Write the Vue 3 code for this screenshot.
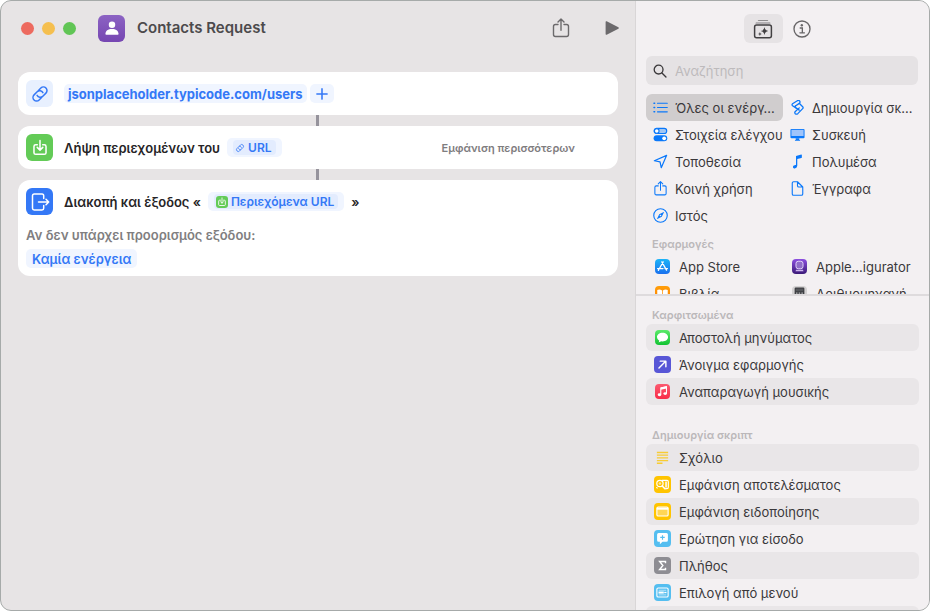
<script setup>
import { ref } from 'vue'

const search = ref('')
const selected = ref('all')

const link =
  '<g fill="none" stroke="currentColor" stroke-width="1.5" stroke-linecap="round" transform="rotate(-45 10 10)"><path d="M8.6 13.6H5.2a3.6 3.6 0 0 1 0-7.2h4.4a3.6 3.6 0 0 1 3.4 4.7"/><path d="M11.4 6.4h3.4a3.6 3.6 0 0 1 0 7.2h-4.4A3.6 3.6 0 0 1 7 8.9"/></g>'
const download =
  '<g fill="none" stroke="#fff" stroke-width="1.7" stroke-linecap="round" stroke-linejoin="round"><path d="M7 6.4H5.2Q3.3 6.4 3.3 8.2v7Q3.3 17 5.2 17h9.6q1.9 0 1.9-1.8v-7q0-1.8-1.9-1.8H13"/><path d="M10 1.8v10.4M6.9 9.3l3.1 3.1 3.1-3.1"/></g>'
const share =
  '<g fill="none" stroke="currentColor" stroke-width="1.4" stroke-linecap="round" stroke-linejoin="round"><path d="M7 6.500H4.400Q2.500 6.500 2.500 8.400v8.200q0 1.900 1.900 1.900h11.200q1.900 0 1.900-1.900V8.400q0-1.900-1.900-1.900H13"/><path d="M10 12.300V1M7 3.900l3-3 3 3"/></g>'

const icons = {
  link,
  download,
  share,
  person: '<circle cx="10" cy="6.300" r="3.600"/><path d="M2.700 16.800c0-3.400 3-5.600 7.300-5.600s7.300 2.200 7.300 5.600q0 .8-.9.8H3.600q-.9 0-.9-.8z"/>',
  exit: '<g fill="none" stroke="#fff" stroke-width="1.500" stroke-linecap="round" stroke-linejoin="round"><path d="M13.700 6.500V3.800q0-1.700-1.700-1.700H4.200q-1.700 0-1.700 1.700v12.400q0 1.700 1.700 1.700H12q1.700 0 1.700-1.700v-2.700"/><path d="M8.500 10h10.200M16 7.300l2.700 2.700-2.700 2.700"/></g>',
  play: '<path d="M2.900 3.300q0-1.300 1.200-.7l13 6.600q1.300.8 0 1.600l-13 6.600q-1.200.6-1.200-.7z"/>',
  library: '<path d="M5.500 1.100h9q.7 0 .7.700H4.800q0-.7.700-.7z" opacity=".7"/><path d="M3.200 3.400h13.600q.7 0 .7 1h-15q0-1 .700-1z" opacity=".6"/><rect x="1.600" y="6" width="16.800" height="12.800" rx="2" fill="none" stroke="currentColor" stroke-width="1.500"/><path d="M11.500 8.100q.4 3.500 3.800 4-3.400.5-3.800 4-.4-3.500-3.800-4 3.400-.5 3.800-4zM6.900 13.100q.2 1.800 1.900 2-1.700.2-1.900 2-.2-1.800-1.900-2 1.700-.2 1.900-2z"/>',
  info: '<circle cx="10" cy="10" r="8.900" fill="none" stroke="currentColor" stroke-width="1.500"/><circle cx="9.800" cy="5.800" r="1.300"/><path d="M8 8.900h2.400v5.300M7.700 14.300h5" fill="none" stroke="currentColor" stroke-width="1.500" stroke-linecap="round"/>',
  search: '<g fill="none" stroke="currentColor" stroke-width="1.900" stroke-linecap="round"><circle cx="8" cy="8" r="6.300"/><path d="M12.800 12.800l5.700 5.700"/></g>',
  plus: '<path d="M10 1.500v17M1.500 10h17" fill="none" stroke="currentColor" stroke-width="2.600" stroke-linecap="round"/>',
  list: '<g stroke="currentColor" stroke-width="1.600" stroke-linecap="round"><path d="M6 4.300h13M6 10h13M6 15.700h13"/><path d="M1.300 4.300h.9M1.300 10h.9M1.300 15.700h.9" stroke-width="2"/></g>',
  toggles: '<rect x="1.500" y="1.800" width="16.800" height="6.800" rx="3.400" fill="none" stroke="currentColor" stroke-width="1.500"/><path d="M5 1.800h9.900a3.400 3.400 0 0 1 0 6.800H5a3.400 3.400 0 0 0 0-6.800z" opacity=".35"/><circle cx="5" cy="5.200" r="3.100" fill="#fff" stroke="currentColor" stroke-width="1.500"/><rect x=".8" y="11" width="18.200" height="8" rx="4"/><circle cx="14.900" cy="15" r="2.500" fill="#fff"/>',
  arrow: '<path d="M18.200 1.800L1.800 9l7.600 1.600L11 18.200z" fill="none" stroke="currentColor" stroke-width="1.600" stroke-linejoin="round"/>',
  compass: '<circle cx="10" cy="10" r="9" fill="none" stroke="currentColor" stroke-width="1.500"/><path d="M15 5l-3.300 6.700L5 15l3.300-6.700z"/><circle cx="10" cy="10" r="1.100" fill="#f3f0f2"/>',
  script: '<g fill="none" stroke="currentColor" stroke-width="1.700" stroke-linejoin="round" stroke-linecap="round"><path d="M7.400 10.200L3.400 7.600Q2 6.300 3.400 5L9.800.9q2-.9 3.200.6 1 1.700-.6 3L7.200 8"/><path d="M7.200 8q-1 1 .2 2.200l5 3.300"/><path d="M12.600 4.700l4.300 4.200q1.200 1.400 0 2.600l-6.500 6.700q-1.800 1.400-3.400.1-1.300-1.600.1-3.100l5.300-4.700"/></g>',
  display: '<rect x=".6" y="2.600" width="18.800" height="12.400" rx="1.400"/><rect x="1.900" y="3.800" width="16.200" height="8.200" fill="#9fc4fb"/><path d="M7.600 15h4.800v2.300h1v1H6.600v-1h1z"/>',
  note: '<path d="M8 2.500L15 .7q.8-.1.8.700v3.200q0 .5-.6.700L9.700 6.700v9q0 2.900-3.300 3.500-2.500.4-2.500-1.800 0-1.800 2.200-2.300l1.200-.3q.700-.2.700-.9z"/>',
  doc: '<path d="M3 2.800Q3 1 4.800 1H10l7 7v9.200Q17 19 15.200 19H4.800Q3 19 3 17.200zM10 1.200v5q0 1.800 1.800 1.800h5" fill="none" stroke="currentColor" stroke-width="1.500" stroke-linejoin="round"/>',
  store: '<g stroke="#fff" stroke-width="1.700" stroke-linecap="round"><path d="M10.900 3.800L5.900 12.600M9.100 3.800l6.300 11M3.400 12.700h7.300M13.300 12.700h3.300M5 14.200l-.5.900"/></g>',
  configurator: '<rect x="5.300" y="3" width="9.400" height="10" rx="3" fill="#8f6cc8" stroke="#eadcff" stroke-width="1.200"/><path d="M5.500 14.300h9l.9 2H4.600z" fill="#cdb6ee"/>',
  books: '<path d="M9.500 6Q6.500 4 3 5.200v9.500q3.600-.9 6.500.8zM10.500 6Q13.500 4 17 5.200v9.500q-3.600-.9-6.500.8z" fill="#fff"/>',
  calculator: '<rect x="3.500" y="2" width="13" height="16" rx="1.500" fill="#3d3e42"/><rect x="5" y="3.500" width="10" height="3.500" fill="#55575b"/><path d="M5.300 9.500h9.400M5.300 12.500h9.400M5.300 15.500h9.400" stroke="#b7b8bb" stroke-width="1.500" stroke-dasharray="2 1.600"/>',
  bubble: '<path d="M10 3.500c4.200 0 7.400 2.500 7.400 5.900s-3.200 5.900-7.400 5.900q-1 0-1.900-.2-1.500 1.300-3.500 1.300.9-.9 1.100-2.200-3.100-1.500-3.100-4.800C2.600 6 5.800 3.500 10 3.500z" fill="#fff"/>',
  upright: '<path d="M5.300 14.700l8.900-8.900M7 5.500h7.500V13" fill="none" stroke="#fff" stroke-width="1.900" stroke-linecap="round" stroke-linejoin="round"/>',
  music: '<path d="M7.700 14V5.200l7.600-1.600v8.900" fill="none" stroke="#fff" stroke-width="1.400"/><path d="M7.700 4.600l7.600-1.600v3L7.700 7.600z" fill="#fff"/><ellipse cx="6" cy="14.300" rx="2.400" ry="1.900" fill="#fff"/><ellipse cx="13.600" cy="12.800" rx="2.400" ry="1.900" fill="#fff"/>',
  comment: '<path d="M2.500 3.300h15M2.500 6.900h15M2.500 10.500h15M2.500 14.100h15M2.500 17.700h7.500" stroke="#f7cc35" stroke-width="1.800"/>',
  result: '<path d="M9 4.500h7q1.800 0 1.800 1.800v7.400q0 1.800-1.800 1.800h-2.500M3.500 15q-1.300-.2-1.300-1.800" fill="none" stroke="#fff" stroke-width="1.500"/><path d="M13.500 6h2.600v8h-2.600z" fill="#fff" opacity=".8"/><circle cx="6.600" cy="8.600" r="4.200" fill="#ffc400" stroke="#fff" stroke-width="1.600"/><path d="M9.700 11.900l3.500 3.700" stroke="#fff" stroke-width="2.100" stroke-linecap="round"/><circle cx="6.600" cy="8.600" r="1.700" fill="#fff" opacity=".6"/>',
  window: '<rect x="2.500" y="4" width="15" height="12" rx="1.800" fill="#ffd655" stroke="#fff" stroke-width="1.500"/><path d="M2.500 5h15v2.600h-15z" fill="#fff"/>',
  ask: '<path d="M4.800 2.800h10.400q2 0 2 2v7.400q0 2-2 2H10l-3.500 3.300v-3.300H4.800q-2 0-2-2V4.800q0-2 2-2z" fill="#fff"/><path d="M10 5.500v6M7 8.500h6" stroke="#55bef0" stroke-width="1.500"/>',
  sigma: '<path d="M14 7V4.700H6.200L10.500 10l-4.300 5.300H14V13" fill="none" stroke="#fff" stroke-width="1.900"/>',
  menu: '<rect x="2.500" y="4" width="15" height="12" rx="1.800" fill="none" stroke="#fff" stroke-width="1.500"/><path d="M5 7h10M5 13.200h10" stroke="#fff" stroke-width="1.100" opacity=".7"/><path d="M4.700 8.700h7v2.700h-7z" fill="#fff"/><path d="M12.300 10h3" stroke="#fff" stroke-width="1.700"/>',
}

const categories = [
  { id: 'all', icon: 'list', label: 'Όλες οι ενέργ…' },
  { id: 'scripting', icon: 'script', label: 'Δημιουργία σκ…' },
  { id: 'controls', icon: 'toggles', label: 'Στοιχεία ελέγχου' },
  { id: 'device', icon: 'display', label: 'Συσκευή' },
  { id: 'location', icon: 'arrow', label: 'Τοποθεσία' },
  { id: 'media', icon: 'note', label: 'Πολυμέσα' },
  { id: 'sharing', icon: 'share', label: 'Κοινή χρήση' },
  { id: 'documents', icon: 'doc', label: 'Έγγραφα' },
  { id: 'web', icon: 'compass', label: 'Ιστός' },
]
const apps = [
  { icon: 'store', tone: 'azure', label: 'App Store' },
  { icon: 'configurator', tone: 'violet', label: 'Apple…igurator' },
  { icon: 'books', tone: 'orange', label: 'Βιβλία' },
  { icon: 'calculator', tone: 'silver', label: 'Αριθμομηχανή' },
]
const groups = [
  {
    title: 'Καρφιτσωμένα',
    items: [
      { icon: 'bubble', tone: 'lime', label: 'Αποστολή μηνύματος' },
      { icon: 'upright', tone: 'indigo', label: 'Άνοιγμα εφαρμογής' },
      { icon: 'music', tone: 'red', label: 'Αναπαραγωγή μουσικής' },
    ],
  },
  {
    title: 'Δημιουργία σκριπτ',
    items: [
      { icon: 'comment', tone: 'bare', label: 'Σχόλιο' },
      { icon: 'result', tone: 'yellow', label: 'Εμφάνιση αποτελέσματος' },
      { icon: 'window', tone: 'yellow', label: 'Εμφάνιση ειδοποίησης' },
      { icon: 'ask', tone: 'sky', label: 'Ερώτηση για είσοδο' },
      { icon: 'sigma', tone: 'gray', label: 'Πλήθος' },
      { icon: 'menu', tone: 'sky', label: 'Επιλογή από μενού' },
      { icon: '', tone: 'bare', label: '' },
    ],
  },
]
</script>

<template>
  <div class="window">
    <main class="editor">
      <header class="titlebar">
        <div class="lights">
          <button class="light close" aria-label="Κλείσιμο"></button>
          <button class="light minimize" aria-label="Ελαχιστοποίηση"></button>
          <button class="light zoom" aria-label="Ζουμ"></button>
        </div>
        <span class="badge purple"><svg viewBox="0 0 20 20" class="s18" v-html="icons.person" /></span>
        <h1>Contacts Request</h1>
        <div class="tools">
          <button aria-label="Κοινή χρήση"><svg viewBox="0 0 20 20" class="s20" v-html="icons.share" /></button>
          <button aria-label="Εκτέλεση"><svg viewBox="0 0 20 20" class="s18" v-html="icons.play" /></button>
        </div>
      </header>

      <ol class="steps">
        <li class="card">
          <div class="line">
            <span class="badge pale"><svg viewBox="0 0 20 20" class="s20" v-html="icons.link" /></span>
            <div class="chips">
              <button class="chip url">jsonplaceholder.typicode.com/users</button>
              <button class="chip" aria-label="Προσθήκη"><svg viewBox="0 0 20 20" class="s12" v-html="icons.plus" /></button>
            </div>
          </div>
        </li>
        <li class="card">
          <div class="line">
            <span class="badge green"><svg viewBox="0 0 20 20" class="s18" v-html="icons.download" /></span>
            <span>Λήψη περιεχομένων του</span>
            <button class="chip var"><span class="token"><svg viewBox="0 0 20 20" class="s10" v-html="icons.link" />URL</span></button>
            <button class="more">Εμφάνιση περισσότερων</button>
          </div>
        </li>
        <li class="card">
          <div class="line">
            <span class="badge blue"><svg viewBox="0 0 20 20" class="s20" v-html="icons.exit" /></span>
            <span>Διακοπή και έξοδος «</span>
            <button class="chip var"><span class="token"><span class="mini"><svg viewBox="0 0 20 20" class="s10" v-html="icons.download" /></span>Περιεχόμενα URL</span></button>
            <span>»</span>
          </div>
          <div class="extra">
            <p>Αν δεν υπάρχει προορισμός εξόδου:</p>
            <button class="chip">Καμία ενέργεια</button>
          </div>
        </li>
      </ol>
    </main>

    <aside class="sidebar">
      <div class="tabs">
        <button class="tab active" aria-label="Βιβλιοθήκη ενεργειών"><svg viewBox="0 0 20 20" class="s20" v-html="icons.library" /></button>
        <button class="tab" aria-label="Πληροφορίες"><svg viewBox="0 0 20 20" class="s18" v-html="icons.info" /></button>
      </div>
      <label class="search">
        <svg viewBox="0 0 20 20" class="s14" v-html="icons.search" />
        <input v-model="search" type="search" placeholder="Αναζήτηση" aria-label="Αναζήτηση" />
      </label>

      <section class="browse">
        <div class="grid">
          <button
            v-for="c in categories"
            :key="c.id"
            class="cat"
            :class="{ selected: selected === c.id }"
            @click="selected = c.id"
          >
            <svg viewBox="0 0 20 20" class="s15" v-html="icons[c.icon]" />{{ c.label }}
          </button>
        </div>
        <h2>Εφαρμογές</h2>
        <div class="grid">
          <button v-for="a in apps" :key="a.label" class="cat app">
            <span class="tile" :class="a.tone"><svg viewBox="0 0 20 20" class="s15" v-html="icons[a.icon]" /></span>{{ a.label }}
          </button>
        </div>
      </section>

      <section class="actions">
        <div v-for="g in groups" :key="g.title" class="group">
          <h2>{{ g.title }}</h2>
          <ul>
            <li v-for="i in g.items" :key="i.label">
              <button class="action">
                <span class="tile" :class="i.tone"><svg viewBox="0 0 20 20" class="s15" v-html="icons[i.icon]" /></span>{{ i.label }}
              </button>
            </li>
          </ul>
        </div>
      </section>
    </aside>
  </div>
</template>

<style>
body {
  background: #fff;
}
</style>

<style scoped>
* {
  box-sizing: border-box;
  margin: 0;
  padding: 0;
}
.window {
  display: grid;
  grid-template-columns: minmax(0, 1fr) 294px;
  height: calc(100vh - 1px);
  margin-right: 1px;
  border: 1px solid #a6aaa9;
  border-radius: 11px;
  overflow: hidden;
  background: #e7e4e5;
  font: 13px/16px Inter, "Noto Sans", sans-serif;
  color: #3a383a;
}
button {
  border: 0;
  background: none;
  font: inherit;
  color: inherit;
  text-align: left;
  white-space: nowrap;
}
svg {
  display: block;
  flex: none;
  fill: currentColor;
}
ol,
ul {
  list-style: none;
}
.s10 { width: 10px; height: 10px; }
.s12 { width: 12px; height: 12px; }
.s14 { width: 14px; height: 14px; }
.s15 { width: 15px; height: 15px; }
.s18 { width: 18px; height: 18px; }
.s20 { width: 20px; height: 20px; }

.editor {
  min-width: 0;
}
.titlebar {
  display: flex;
  align-items: center;
  height: 54px;
  padding: 0 14px 0 20px;
}
.lights {
  display: flex;
  gap: 8px;
  margin-right: 22px;
}
.light {
  width: 13px;
  height: 13px;
  border-radius: 50%;
}
.close { background: #ed6a5f; }
.minimize { background: #f5bf4f; }
.zoom { background: #61c555; }
.badge {
  display: flex;
  flex: none;
  align-items: center;
  justify-content: center;
  width: 27px;
  height: 27px;
  border-radius: 6px;
  color: #fff;
}
.purple { background: linear-gradient(#8c63c3, #7646b2); }
.pale { background: #e8f0fe; color: #3478f6; }
.green { background: #63cb57; }
.blue { background: #3478f6; }
h1 {
  margin-left: 12px;
  font-size: 15px;
  line-height: 20px;
  font-weight: 600;
  color: #4c4a4c;
}
.tools {
  display: flex;
  align-items: center;
  gap: 32px;
  margin-left: auto;
  color: #6c6a6c;
}

.steps {
  display: flex;
  flex-direction: column;
  gap: 11px;
  padding: 17px 17px 0;
}
.card {
  position: relative;
  padding: 8px;
  border-radius: 12px;
  background: #fff;
  font-weight: 600;
  color: #262426;
}
.card + .card::before {
  content: "";
  position: absolute;
  left: 50%;
  bottom: 100%;
  width: 3px;
  height: 11px;
  margin-left: -2px;
  background: #96939c;
}
.line {
  display: flex;
  align-items: center;
  gap: 7px;
}
.line .badge {
  margin-right: 4px;
}
.chips {
  display: flex;
  gap: 3px;
}
.chip {
  display: flex;
  align-items: center;
  height: 19px;
  padding: 0 6px;
  border-radius: 5px;
  background: #f0f5ff;
  color: #3478f6;
}
.url {
  padding: 0 4px;
  font-weight: 700;
}
.var {
  font-size: 12px;
}
.token {
  display: flex;
  align-items: center;
  gap: 3px;
  height: 15px;
  padding: 0 4px 0 2px;
  border-radius: 4px;
  background: #e3ecfe;
}
.mini {
  padding: 1px;
  border-radius: 3px;
  background: #63cb57;
}
.more {
  margin-left: auto;
  padding-right: 35px;
  font-size: 11px;
  color: #7f7d7f;
}
.extra {
  display: flex;
  flex-direction: column;
  align-items: flex-start;
  gap: 6px;
  padding-top: 12px;
}
.extra p {
  color: #807e80;
}

.sidebar {
  display: flex;
  flex-direction: column;
  min-height: 0;
  border-left: 1px solid #d9d6d7;
  background: #f3f0f2;
}
.tabs {
  display: flex;
  justify-content: center;
  padding: 13px 0;
}
.tab {
  display: flex;
  align-items: center;
  justify-content: center;
  width: 39px;
  height: 29px;
  border-radius: 6px;
  color: #686668;
}
.active {
  background: #e6e3e5;
  color: #424042;
}
.search {
  display: flex;
  flex: none;
  align-items: center;
  gap: 8px;
  height: 29px;
  margin: 0 11px 0 10px;
  padding: 0 7px;
  border-radius: 6px;
  background: #e5e2e4;
}
.search input {
  flex: 1;
  min-width: 0;
  border: 0;
  outline: 0;
  background: none;
  font: inherit;
}
.search input::placeholder {
  color: #bdbabc;
}
.browse {
  flex: none;
  height: 211px;
  padding: 9px 10px 0;
  border-bottom: 2px solid #dedbdd;
  overflow: hidden;
}
.grid {
  display: grid;
  grid-template-columns: repeat(2, 137px);
}
.cat {
  display: flex;
  align-items: center;
  gap: 7px;
  height: 27px;
  padding: 0 7px;
  border-radius: 6px;
}
.cat > svg {
  color: #0a78fa;
}
.selected {
  background: #d0cdce;
}
h2 {
  padding: 8px 6px 2px;
  font-size: 11px;
  line-height: 14px;
  font-weight: 600;
  color: #bbb8ba;
}
.app,
.action {
  display: flex;
  align-items: center;
  gap: 8px;
  padding: 0 8px;
}
.actions {
  flex: 1;
  min-height: 0;
  padding: 4px 10px 0;
  overflow: hidden;
}
.group + .group {
  padding-top: 15px;
}
.action {
  width: 100%;
  height: 27px;
  border-radius: 6px;
}
li:nth-child(odd) > .action {
  background: #e9e6e8;
}
.tile {
  display: flex;
  align-items: center;
  justify-content: center;
  width: 17px;
  height: 17px;
  border-radius: 4px;
}
.azure,
.violet,
.orange,
.silver,
.lime,
.red {
  width: 15px;
  height: 15px;
  margin: 0 1px;
}
.azure { background: linear-gradient(#1cb4f8, #1a70ee); }
.violet { background: linear-gradient(#8c4fe0, #3b1a78); }
.orange { background: linear-gradient(#ff9f0a, #ff7f00); }
.silver { background: #d4d2d3; }
.lime { background: linear-gradient(#5bea6a, #12c332); }
.red { background: linear-gradient(#fb5a70, #f92c48); }
.indigo { background: #5856d6; }
.yellow { background: #ffc400; }
.sky { background: #55bef0; }
.gray { background: #8e8d93; }
</style>
